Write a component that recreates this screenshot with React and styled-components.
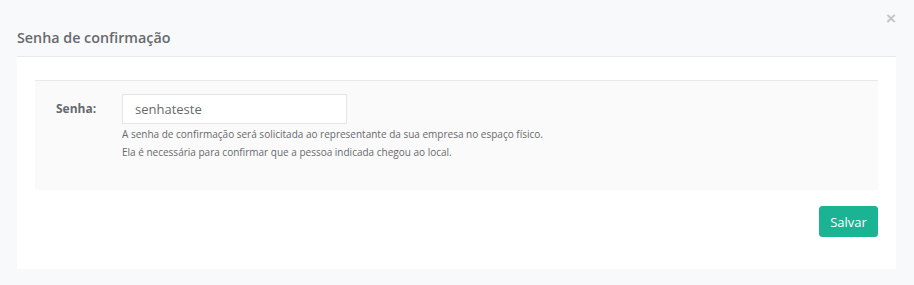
import React from "react";
import styled, { createGlobalStyle } from "styled-components";

const Global = createGlobalStyle`
  html, body { margin: 0; padding: 0; background: #f8f9fb; }
  body { font-family: "Open Sans", "Liberation Sans", sans-serif; color: #676a6c; }
  * { box-sizing: border-box; }
`;

const Page = styled.div`
  width: 914px;
  height: 285px;
  padding: 0 18px 0 17px;
  position: relative;
`;

const Close = styled.button`
  position: absolute;
  top: 10px;
  right: 18px;
  border: 0;
  background: none;
  padding: 0;
  font-family: "Liberation Sans", sans-serif;
  font-size: 17px;
  font-weight: 700;
  line-height: 17px;
  color: #c4c4c4;
  cursor: pointer;
`;

const Header = styled.div`
  height: 56px;
  display: flex;
  align-items: flex-end;
  padding-bottom: 8px;
`;

const Title = styled.h4`
  margin: 0;
  font-size: 14.3px;
  font-weight: 600;
  color: #676a6c;
  line-height: 20px;
`;

const Panel = styled.div`
  background: #fff;
  border-top: 1px solid #e7eaec;
  padding: 23px 18px 31px 18px;
  height: 213px;
`;

const FormBox = styled.div`
  background: #fafafa;
  border-top: 1px solid #e7eaec;
  height: 110px;
  padding: 13px 20px 0 20px;
  display: flex;
  align-items: flex-start;
`;

const Label = styled.label`
  width: 67px;
  padding-top: 7px;
  padding-left: 1px;
  font-size: 12px;
  font-weight: 700;
  line-height: 16px;
  color: #676a6c;
`;

const Field = styled.div`
  display: flex;
  flex-direction: column;
`;

const Input = styled.input`
  width: 225px;
  height: 30px;
  border: 1px solid #e5e6e7;
  background: #fff;
  padding: 0 12px;
  font-family: "Open Sans", sans-serif;
  font-size: 13px;
  color: #676a6c;
  outline: none;
`;

const Help = styled.p`
  margin: 1px 0 0 0;
  font-size: 10px;
  line-height: 18px;
  color: #676a6c;
`;

const Footer = styled.div`
  display: flex;
  justify-content: flex-end;
  margin-top: 16px;
`;

const Button = styled.button`
  background: #1ab394;
  border: 1px solid #1ab394;
  color: #fff;
  border-radius: 3px;
  height: 31px;
  width: 59px;
  font-family: "Open Sans", sans-serif;
  font-size: 13px;
  padding: 0;
  cursor: pointer;
`;

export default function App() {
  return (
    <>
      <Global />
      <Page>
        <Close aria-label="Fechar">×</Close>
        <Header>
          <Title>Senha de confirmação</Title>
        </Header>
        <Panel>
          <FormBox>
            <Label htmlFor="senha">Senha:</Label>
            <Field>
              <Input id="senha" defaultValue="senhateste" />
              <Help>
                A senha de confirmação será solicitada ao representante da sua empresa no espaço físico.
                <br />
                Ela é necessária para confirmar que a pessoa indicada chegou ao local.
              </Help>
            </Field>
          </FormBox>
          <Footer>
            <Button>Salvar</Button>
          </Footer>
        </Panel>
      </Page>
    </>
  );
}
